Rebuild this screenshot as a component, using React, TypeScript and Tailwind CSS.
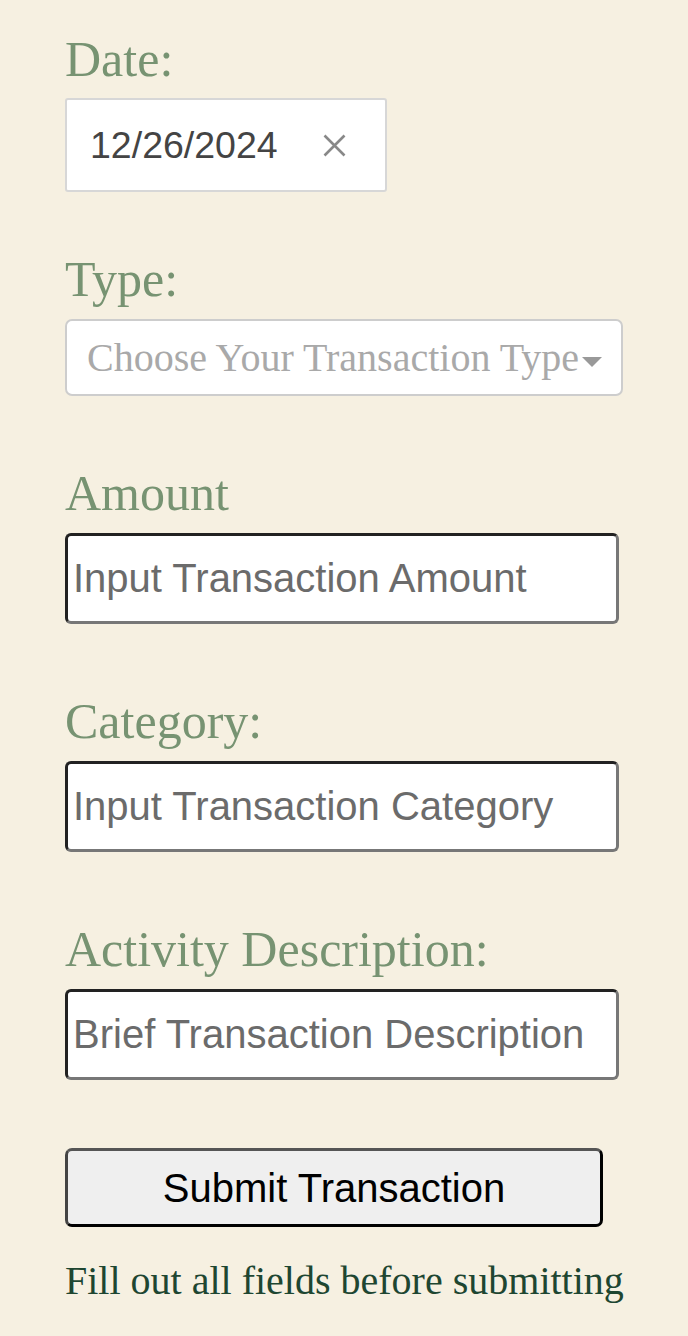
import { useState } from 'react'

const serif = "font-['Liberation_Serif','Times_New_Roman',serif]"
const sans = "font-['Liberation_Sans',Arial,sans-serif]"

function FieldLabel({ htmlFor, children }: { htmlFor: string; children: string }) {
  return (
    <label htmlFor={htmlFor} className={`${serif} block h-[56px] text-[50px] leading-[56px] text-[#779372] mb-[12px]`}>
      {children}
    </label>
  )
}

function TextField({ id, placeholder }: { id: string; placeholder: string }) {
  return (
    <input
      id={id}
      type="text"
      placeholder={placeholder}
      className={`${sans} block h-[91px] w-[554px] rounded-[6px] border-[3px] border-t-[#222] border-l-[#222] border-b-[#777] border-r-[#777] bg-white px-[5px] text-[40px] text-[#444] placeholder:text-[#6b6b6b] outline-none`}
    />
  )
}

export default function App() {
  const [date, setDate] = useState('12/26/2024')

  return (
    <div className="min-h-[1336px] w-full bg-[#f6f0e1] pl-[65px] pt-[31px]">
      <form onSubmit={(e) => e.preventDefault()}>
        <div>
          <label htmlFor="date" className={`${serif} block h-[56px] text-[50px] leading-[56px] text-[#779372] mb-[11px]`}>
            Date:
          </label>
          <div className="flex h-[94px] w-[322px] items-center rounded-[3px] border-2 border-[#d7d7d7] bg-white pl-[23px]">
            <input
              id="date"
              type="text"
              value={date}
              onChange={(e) => setDate(e.target.value)}
              className={`${sans} w-[200px] bg-transparent text-[37.5px] text-[#444] outline-none`}
            />
            <button type="button" onClick={() => setDate('')} className="ml-[33px] text-[#888]">
              <svg width="23" height="23" viewBox="0 0 23 23" fill="none" stroke="currentColor" strokeWidth="2.6">
                <path d="M1.5 1.5 L21.5 21.5 M21.5 1.5 L1.5 21.5" />
              </svg>
            </button>
          </div>
        </div>

        <div className="mt-[59px]">
          <FieldLabel htmlFor="type">Type:</FieldLabel>
          <div
            id="type"
            role="combobox"
            className="flex h-[77px] w-[558px] items-center rounded-[7px] border-2 border-[#cdcdcd] bg-white pl-[20px]"
          >
            <span className={`${serif} text-[40px] text-[#a9a9a9]`}>Choose Your Transaction Type</span>
            <svg className="ml-[3px] mt-[8px]" width="20" height="10" viewBox="0 0 20 10" fill="#999">
              <path d="M0 0 H20 L10 10 Z" />
            </svg>
          </div>
        </div>

        <div className="mt-[69px]">
          <FieldLabel htmlFor="amount">Amount</FieldLabel>
          <TextField id="amount" placeholder="Input Transaction Amount" />
        </div>

        <div className="mt-[69px]">
          <FieldLabel htmlFor="category">Category:</FieldLabel>
          <TextField id="category" placeholder="Input Transaction Category" />
        </div>

        <div className="mt-[69px]">
          <FieldLabel htmlFor="description">Activity Description:</FieldLabel>
          <TextField id="description" placeholder="Brief Transaction Description" />
        </div>

        <button
          type="submit"
          className={`${sans} mt-[68px] block h-[79px] w-[538px] rounded-[7px] border-[3px] border-t-[#555] border-l-[#444] border-b-black border-r-black bg-[#efefef] text-[40px] text-black`}
        >
          Submit Transaction
        </button>

        <p className={`${serif} mt-[31px] text-[40px] leading-[45px] text-[#1e4631]`}>
          Fill out all fields before submitting
        </p>
      </form>
    </div>
  )
}
